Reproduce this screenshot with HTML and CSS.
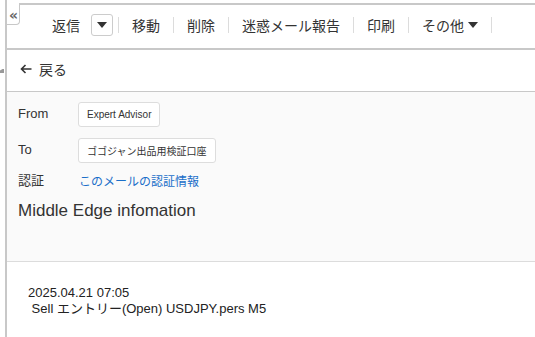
FILE: index.html
```html
<!DOCTYPE html>
<html lang="ja">
<head>
<meta charset="utf-8">
<link rel="stylesheet" href="styles.css">
</head>
<body>
<div class="app">
  <div class="rail"><svg class="rail-mark" width="4" height="4" viewBox="0 0 4 4"><path d="M0 4V1.5L2.5 0H4v4z" fill="#999"/></svg></div>
  <div class="main">
    <button class="collapse" type="button">«</button>
    <div class="toolbar">
      <span class="tb-item">返信</span>
      <span class="tb-drop"><svg width="10" height="6" viewBox="0 0 10 6"><path d="M0 0h10L5 6z" fill="#333"/></svg></span>
      <span class="sep"></span>
      <span class="tb-item">移動</span>
      <span class="sep"></span>
      <span class="tb-item">削除</span>
      <span class="sep"></span>
      <span class="tb-item">迷惑メール報告</span>
      <span class="sep"></span>
      <span class="tb-item">印刷</span>
      <span class="sep"></span>
      <span class="tb-item">その他<svg class="caret" width="10" height="6" viewBox="0 0 10 6"><path d="M0 0h10L5 6z" fill="#333"/></svg></span>
      <span class="sep"></span>
    </div>
    <div class="backrow">
      <svg class="back-arrow" width="12" height="10" viewBox="0 0 12 10"><path d="M11.5 5H1.5M5.5 1L1.5 5l4 4" fill="none" stroke="#333" stroke-width="1.6"/></svg>
      <span>戻る</span>
    </div>
    <div class="header">
      <div class="hrow">
        <span class="hlabel">From</span>
        <span class="chip">Expert Advisor</span>
      </div>
      <div class="hrow">
        <span class="hlabel">To</span>
        <span class="chip">ゴゴジャン出品用検証口座</span>
      </div>
      <div class="hrow auth">
        <span class="hlabel">認証</span>
        <a class="link" href="#">このメールの認証情報</a>
      </div>
      <div class="subject">Middle Edge infomation</div>
    </div>
    <div class="body">
      <div>2025.04.21 07:05</div>
      <div class="pre"> Sell エントリー(Open) USDJPY.pers M5</div>
    </div>
  </div>
</div>
</body>
</html>
```
FILE: styles.css
```css
html, body {
  margin: 0;
  padding: 0;
  background: #fff;
}
body {
  font-family: "Liberation Sans", Arial, "Noto Sans CJK JP", sans-serif;
  color: #333;
  width: 535px;
  height: 337px;
  overflow: hidden;
}
.app {
  display: flex;
  height: 337px;
}
.rail {
  position: relative;
  width: 5px;
  border-right: 2px solid #c8c8c8;
  flex: none;
}
.rail-mark {
  position: absolute;
  left: 0;
  top: 69px;
}
.main {
  position: relative;
  flex: 1;
  display: flex;
  flex-direction: column;
}
.collapse {
  position: absolute;
  left: 0;
  top: 3px;
  width: 13px;
  height: 22px;
  margin: 0;
  padding: 7px 0 0 1px;
  background: #fff;
  border: 1px solid #c8c8c8;
  border-left: none;
  border-top: none;
  border-bottom-right-radius: 4px;
  font-family: "DejaVu Sans", sans-serif;
  font-weight: bold;
  font-size: 14px;
  line-height: 10px;
  color: #666;
  display: flex;
  justify-content: center;
  align-items: flex-start;
  z-index: 2;
}
.toolbar {
  margin-top: 3px;
  height: 43px;
  box-sizing: content-box;
  border-top: 2px solid #c8c8c8;
  border-bottom: 2px solid #c8c8c8;
  display: flex;
  align-items: center;
  padding-left: 45px;
  font-size: 14px;
}
.toolbar > * {
  position: relative;
  top: -2px;
}
.tb-item {
  display: flex;
  align-items: center;
  color: #333;
}
.tb-drop {
  margin-left: 11px;
  width: 20px;
  height: 20px;
  border: 1px solid #ccc;
  border-radius: 3px;
  display: flex;
  align-items: center;
  justify-content: center;
}
.tb-drop + .sep {
  margin-left: 5px;
}
.sep {
  width: 1px;
  height: 16px;
  background: #dcdcdc;
  margin: 0 13px;
}
.sep:nth-of-type(4) {
  margin-right: 12px;
}
.caret {
  margin-left: 4px;
}
.backrow {
  height: 42px;
  box-sizing: border-box;
  padding-bottom: 4px;
  border-bottom: 1px solid #c8c8c8;
  display: flex;
  align-items: center;
  padding-left: 13px;
  gap: 7px;
  font-size: 14px;
}
.header {
  background: #fafafa;
  border-bottom: 1px solid #dcdcdc;
  height: 170px;
  padding: 10px 0 0 11px;
  box-sizing: border-box;
}
.hrow {
  display: flex;
  align-items: center;
  height: 25px;
  margin-bottom: 11px;
  font-size: 13px;
}
.hlabel {
  width: 60px;
  position: relative;
  top: -1px;
}
.chip {
  background: #fff;
  border: 1px solid #ddd;
  border-radius: 3px;
  height: 23px;
  display: flex;
  align-items: center;
  padding: 0 8px;
  font-size: 10px;
}
.auth {
  height: 18px;
  margin-top: -3px;
  margin-bottom: 0;
}
.link {
  color: #1a6fc9;
  text-decoration: none;
  margin-left: 1px;
  font-size: 12px;
}
.subject {
  margin-top: 12px;
  font-size: 17px;
  color: #333;
}
.body {
  padding: 23px 0 0 21px;
  font-size: 13px;
  line-height: 16px;
  color: #222;
}
.pre {
  white-space: pre;
}
```
